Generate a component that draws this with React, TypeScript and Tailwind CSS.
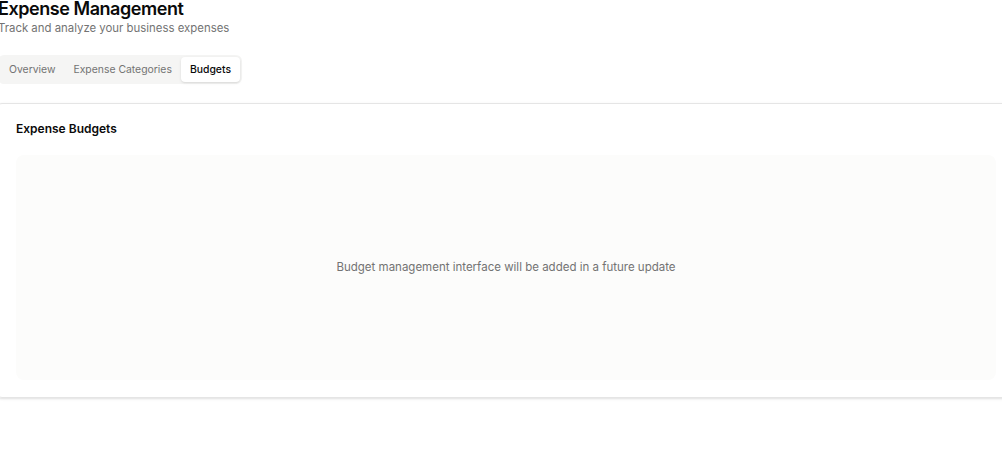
export default function App() {
  return (
    <div className="min-h-[460px] bg-white text-[#0a0a0a] font-['Inter',sans-serif] -ml-[2px] overflow-hidden">
      <div className="-mt-[2px]">
        <h1 className="text-[18px] leading-[22px] font-semibold tracking-tight">Expense Management</h1>
        <p className="text-[11.4px] leading-[16px] text-[#737373]">Track and analyze your business expenses</p>
      </div>

      <div className="mt-[19px] inline-flex items-center h-[29px] rounded-md bg-[#f5f5f4] p-[2px]">
        <button className="px-[9px] h-[25px] text-[10.4px] text-[#737373] rounded">Overview</button>
        <button className="px-[9px] h-[25px] text-[10.4px] text-[#737373] rounded">Expense Categories</button>
        <button className="px-[9px] h-[25px] text-[10.4px] text-[#0a0a0a] font-medium bg-white rounded shadow-sm">Budgets</button>
      </div>

      <div className="mt-[19px] -ml-[4px] w-[1024px] border border-[#e5e5e5] shadow-sm rounded-lg">
        <div className="px-[21px] pt-[17px] pb-[17px]">
          <h2 className="text-[12px] leading-[16px] font-semibold">Expense Budgets</h2>
          <div className="mt-[18px] w-[980px] h-[225px] rounded-lg bg-[#fcfcfb] flex items-center justify-center">
            <p className="text-[11.5px] text-[#737373]">Budget management interface will be added in a future update</p>
          </div>
        </div>
      </div>
    </div>
  );
}
